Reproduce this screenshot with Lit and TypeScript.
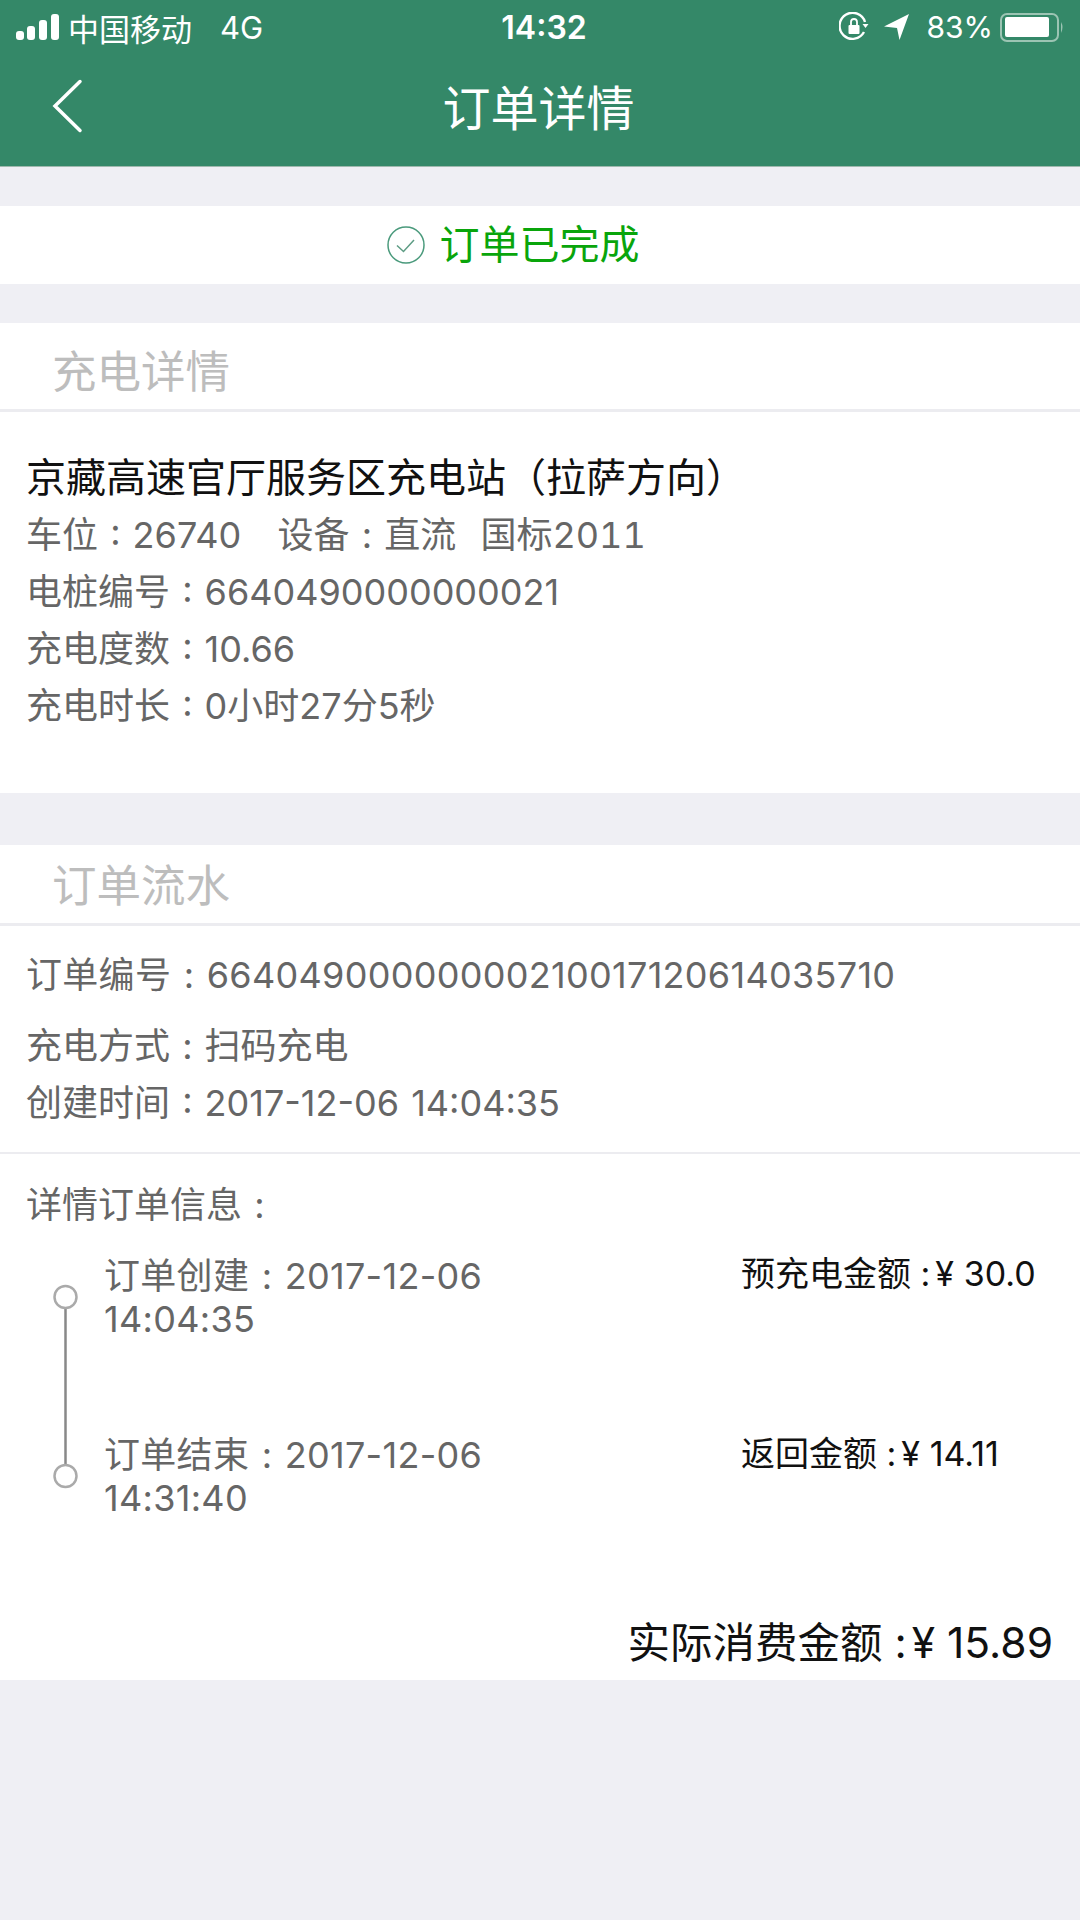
import { LitElement, html, css } from "lit";
import { customElement } from "lit/decorators.js";

@customElement("app-root")
export class AppRoot extends LitElement {
  static styles = css`
    :host {
      display: block;
      width: 1080px;
      height: 1920px;
      background: #efeff4;
      font-family: "Inter", "Noto Sans CJK SC", sans-serif;
      color: #666;
      overflow: hidden;
    }
    .top {
      background: #348868;
      height: 167px;
      border-bottom: 1px solid #9fb9ae;
      box-sizing: border-box;
      color: #fff;
    }
    .status {
      height: 54px;
      display: flex;
      align-items: center;
      padding: 0 14px 0 16px;
      font-size: 31px;
      position: relative;
    }
    .signal { display: block; margin-right: 8px; }
    .net { margin-left: 28px; }
    .time {
      position: absolute;
      left: 0;
      right: 0;
      padding-left: 8px;
      text-align: center;
      font-weight: 600;
      font-size: 32px;
    }
    .status-right { margin-left: auto; display: flex; align-items: center; font-size: 30px; }
    .lock { display: block; }
    .arrow { display: block; margin-left: 15px; }
    .pct { margin-left: 16px; }
    .batt { display: block; margin-left: 7px; }
    .nav {
      height: 112px;
      box-sizing: border-box;
      padding: 0 3px 10px 0;
      display: flex;
      align-items: center;
      justify-content: center;
      position: relative;
      font-size: 48px;
    }
    .back { position: absolute; left: 52px; top: 24px; }
    .done {
      margin-top: 39px;
      height: 78px;
      background: #fff;
      display: flex;
      align-items: center;
      justify-content: center;
      gap: 15px;
      padding-right: 54px;
      color: #09a50b;
      font-size: 40px;
    }
    .done span { padding-bottom: 6px; }
    .card { background: #fff; }
    .c1 { margin-top: 39px; height: 470px; }
    .c2 { margin-top: 52px; height: 835px; }
    .head {
      box-sizing: border-box;
      padding-left: 52px;
      display: flex;
      align-items: center;
      font-size: 44.5px;
      color: #bdbdbd;
      border-bottom: 3px solid #ececf0;
    }
    .c1 .head { height: 89px; padding-top: 4px; }
    .c2 .head { height: 81px; padding-bottom: 4px; }
    .body { padding: 0 27px 0 26px; font-size: 36px; word-spacing: 2px; }
    .c1 .body { padding-top: 38px; }
    .row { height: 57px; line-height: 57px; white-space: pre; }
    .name { color: #111; font-size: 40px; line-height: 55px; }
    .top-rows {
      padding: 21px 27px 0 26px;
      font-size: 36px;
      word-spacing: 2px;
      height: 228px;
      box-sizing: border-box;
      border-bottom: 2px solid #ececf0;
    }
    .gap { margin-bottom: 14px; }
    .order { letter-spacing: 0.3px; }
    .tn { font-variant-numeric: tabular-nums; }
    .detail-title { margin-top: 23px; }
    .timeline { display: grid; grid-template-columns: 78px 1fr 312px; margin-top: 21px; }
    .rail { display: block; }
    .stamps { display: flex; flex-direction: column; gap: 93px; width: 420px; }
    .stamp { line-height: 43px; letter-spacing: 0.3px; }
    .amounts {
      display: flex;
      flex-direction: column;
      gap: 144px;
      padding-top: 1px;
      color: #111;
      font-size: 34px;
      line-height: 36px;
      word-spacing: 0;
    }
    .total { margin-top: 98px; text-align: right; color: #111; font-size: 42.500px; line-height: 50px; word-spacing: 0; }
    .yen { margin-left: 5px; }
  `;

  render() {
    return html`
      <div class="top">
        <div class="status">
          <svg class="signal" width="44" height="28" viewBox="0 0 44 28" fill="#fff">
            <rect x="0" y="18" width="8" height="9" rx="3" />
            <rect x="11" y="13" width="8" height="14" rx="3" />
            <rect x="23" y="7" width="8" height="20" rx="3" />
            <rect x="35" y="1" width="8" height="26" rx="3" />
          </svg>
          <span>中国移动</span><span class="net">4G</span>
          <span class="time">14:32</span>
          <div class="status-right">
            <svg class="lock" width="30" height="30" viewBox="0 0 30 30" fill="none" stroke="#fff" stroke-width="2.4">
              <path d="M25 20A13 13 0 1 1 26 10" />
              <path d="M23.500 12h6l-3 4z" fill="#fff" stroke="none" />
              <rect x="9.500" y="13" width="11" height="9" rx="1" fill="#fff" stroke="none" />
              <path d="M12 13v-3a3 3 0 0 1 6 0v3" stroke-width="1.800" />
            </svg>
            <svg class="arrow" width="26" height="28" viewBox="0 0 26 28" fill="#fff">
              <path d="M25 1 0 13.500 13 15 15.500 27z" />
            </svg>
            <span class="pct">83%</span>
            <svg class="batt" width="66" height="30" viewBox="0 0 66 30">
              <rect x="1" y="2" width="57" height="27" rx="6" fill="none" stroke="#9cc4b3" stroke-width="2" />
              <rect x="5" y="5" width="44" height="20" rx="2" fill="#fff" />
              <path d="M61 10q3 5 0 11z" fill="#9cc4b3" />
            </svg>
          </div>
        </div>
        <div class="nav">
          <svg class="back" width="32" height="56" viewBox="0 0 32 56" fill="none" stroke="#fff" stroke-width="3.500" stroke-linecap="round">
            <path d="M28 3.500 3 28l25 24.500" />
          </svg>
          订单详情
        </div>
      </div>

      <div class="done">
        <svg width="38" height="38" viewBox="0 0 38 38" fill="none" stroke="#4a9a7c" stroke-width="1.500">
          <circle cx="19" cy="19" r="18" />
          <path d="M10 19.500l6.500 6L27 14" stroke="#5d9c84" />
        </svg>
        <span>订单已完成</span>
      </div>

      <div class="card c1">
        <div class="head">充电详情</div>
        <div class="body">
          <div class="row name">京藏高速官厅服务区充电站（拉萨方向）</div>
          <div class="row">车位 : 26740   设备 : 直流  国标<span class="tn">2011</span></div>
          <div class="row">电桩编号 : 6640490000000021</div>
          <div class="row">充电度数 : 10.66</div>
          <div class="row">充电时长 : 0小时27分5秒</div>
        </div>
      </div>

      <div class="card c2">
        <div class="head">订单流水</div>
        <div class="top-rows">
          <div class="row gap order">订单编号 : 66404900000000210017120614035710</div>
          <div class="row">充电方式 : 扫码充电</div>
          <div class="row">创建时间 : 2017-12-06 14:04:35</div>
        </div>
        <div class="body">
          <div class="row detail-title">详情订单信息 :</div>
          <div class="timeline">
            <svg class="rail" width="78" height="240" viewBox="0 0 78 240" fill="none">
              <line x1="39.500" y1="53" x2="39.500" y2="210" stroke="#888" stroke-width="2.500" />
              <circle cx="39.500" cy="42" r="11" stroke="#aaa" stroke-width="2.500" fill="#fff" />
              <circle cx="39.500" cy="221" r="11" stroke="#aaa" stroke-width="2.500" fill="#fff" />
            </svg>
            <div class="stamps">
              <div class="stamp">订单创建 : 2017-12-06 14:04:35</div>
              <div class="stamp">订单结束 : 2017-12-06 14:31:40</div>
            </div>
            <div class="amounts">
              <div>预充电金额 :<span class="yen">¥</span> 30.0</div>
              <div>返回金额 :<span class="yen">¥</span> 14.11</div>
            </div>
          </div>
          <div class="total">实际消费金额 :<span class="yen">¥</span> 15.89</div>
        </div>
      </div>
    `;
  }
}
